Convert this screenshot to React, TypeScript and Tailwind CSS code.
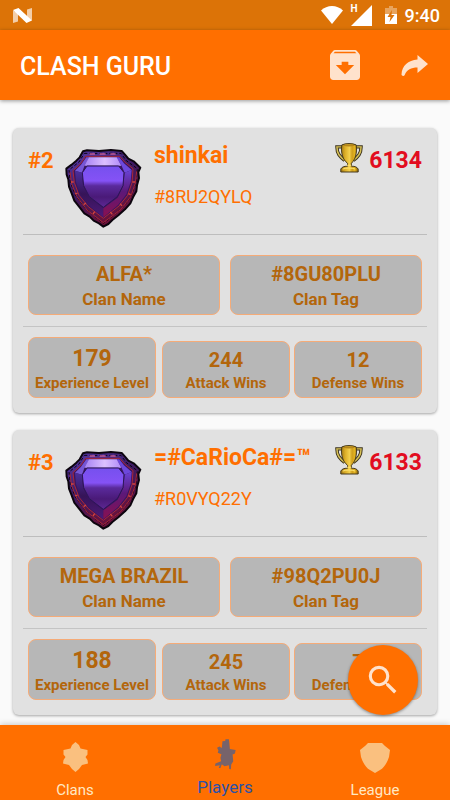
import { MdSearch, MdArchive } from 'react-icons/md';

interface Player {
  rank: number;
  name: string;
  tag: string;
  trophies: number;
  clanName: string;
  clanTag: string;
  level: number;
  attackWins: number;
  defenseWins: number;
}

const PLAYERS: Player[] = [
  {
    rank: 2,
    name: 'shinkai',
    tag: '#8RU2QYLQ',
    trophies: 6134,
    clanName: 'ALFA*',
    clanTag: '#8GU80PLU',
    level: 179,
    attackWins: 244,
    defenseWins: 12,
  },
  {
    rank: 3,
    name: '=#CaRioCa#=™',
    tag: '#R0VYQ22Y',
    trophies: 6133,
    clanName: 'MEGA BRAZIL',
    clanTag: '#98Q2PU0J',
    level: 188,
    attackWins: 245,
    defenseWins: 7,
  },
];

function StatusBar() {
  return (
    <div className="flex h-[30px] shrink-0 items-center justify-between bg-[#dc7307] pl-[13px] pr-[10px] text-white">
      <svg className="h-[15px] w-[19px]" viewBox="0 0 19 15" fill="currentColor">
        <path d="M0 2.500 5 5v8.500L0 15z" opacity=".65" />
        <path d="M14 1.500 19 0v12.500L14 10z" opacity=".65" />
        <path d="M0 2 5.500 0 19 12.500 13.500 15z" />
      </svg>
      <div className="flex items-center">
        <svg className="h-[18px] w-[22px]" viewBox="0 0 22 18" fill="currentColor">
          <path d="M0 4.500C6-1.500 16-1.500 22 4.500L11 18z" />
        </svg>
        <div className="relative ml-2 h-[22px] w-[21px]">
          <svg className="h-full w-full" viewBox="0 0 21 22" fill="currentColor">
            <path d="M21 1v21H0z" />
          </svg>
          <span className="absolute left-0 top-0 text-[10px] font-bold leading-[10px]">H</span>
        </div>
        <svg className="ml-[13px] h-[18px] w-[12px]" viewBox="0 0 12 18" fill="currentColor">
          <path d="M4 0h4v2h4v6H0V2h4z" opacity=".35" />
          <path d="M0 8h12v10H0z" />
          <path d="M7 4 2.500 11H5.500L4.500 16 9.500 9H6.500z" fill="#dc7307" />
        </svg>
        <span className="ml-2 pt-px text-[18px] font-medium">9:40</span>
      </div>
    </div>
  );
}

function AppBar() {
  return (
    <header className="z-10 flex h-[70px] shrink-0 items-center justify-between bg-[#ff6f00] pl-5 pr-[22px] shadow-[0_1px_4px_rgba(0,0,0,0.4)]">
      <h1 className="pt-1 text-[25px] font-medium leading-8 text-white">CLASH GURU</h1>
      <div className="flex items-center gap-9 text-[#ffe2cc]">
        <button aria-label="Archive">
          <MdArchive className="h-10 w-10" />
        </button>
        <button aria-label="Share">
          <svg className="h-[21px] w-[27px]" viewBox="0 0 27 21" fill="currentColor">
            <path d="M27 9 16.500 0v4.500C7 5.500 1 10.500.500 19.500c0 1.500 2.500 2 3.200.500C6 14.500 10 12.600 16.500 12.500V18z" />
          </svg>
        </button>
      </div>
    </header>
  );
}

function LeagueBadge() {
  return (
    <svg className="h-20 w-[78px]" viewBox="18 18 234 240">
      <defs>
        <linearGradient id="badgeRim" x1="0" y1="0" x2=".5" y2="1">
          <stop offset="0" stopColor="#5a3cb4" />
          <stop offset=".5" stopColor="#3d1a62" />
          <stop offset="1" stopColor="#6d1138" />
        </linearGradient>
        <linearGradient id="badgeFace" x1="0" y1="0" x2="0" y2="1">
          <stop offset="0" stopColor="#7650ee" />
          <stop offset=".36" stopColor="#8552f6" />
          <stop offset=".48" stopColor="#5a2a9c" />
          <stop offset=".75" stopColor="#4a1a78" />
          <stop offset="1" stopColor="#5d2894" />
        </linearGradient>
        <linearGradient id="badgeLeft" x1="0" y1="0" x2="0" y2="1">
          <stop offset="0" stopColor="#4c2f9e" />
          <stop offset=".5" stopColor="#361458" />
          <stop offset="1" stopColor="#4c1a78" />
        </linearGradient>
        <linearGradient id="badgeRight" x1="0" y1="0" x2="0" y2="1">
          <stop offset="0" stopColor="#6a43d8" />
          <stop offset=".45" stopColor="#5c1878" />
          <stop offset="1" stopColor="#8a1050" />
        </linearGradient>
        <linearGradient id="badgeTop">
          <stop offset="0" stopColor="#a682f4" />
          <stop offset=".55" stopColor="#dcc0ff" />
          <stop offset="1" stopColor="#b18cf8" />
        </linearGradient>
      </defs>
      <path
        d="M72 28 84 25 120 27 156 24 188 27 198 38 208 50 224 58 244 77 238 90 240 108 234 130 232 148 222 166 214 184 198 202 178 220 160 234 148 246 133 254 120 244 104 236 92 224 76 214 62 196 46 176 38 154 30 134 28 112 23 98 22 80 38 68 52 56 62 46Z"
        fill="url(#badgeRim)"
        stroke="#0c050e"
        strokeWidth="6"
        strokeLinejoin="round"
      />
      <path
        d="M76 34H186L202 56 235 80 231 122 216 164 188 200 133 244 82 202 50 160 34 122 30 84 60 60Z"
        fill="none"
        stroke="#0c050e"
        strokeWidth="3"
        strokeDasharray="9 6"
      />
      <path
        d="M80 43H182L197 60 222 80 219 122 206 160 180 192 133 229 88 194 60 160 46 122 42 86 64 66Z"
        fill="#3a155f"
        stroke="#a8283a"
        strokeWidth="3"
        strokeLinejoin="round"
      />
      <path
        d="M33 90 38 126 54 164 84 204 133 242 186 202 215 164 229 124 233 88"
        fill="none"
        stroke="#a52638"
        strokeWidth="3"
      />
      <path d="M82 46 91 46 77 70 69 92 48 86 66 68Z" fill="#7656d6" />
      <path d="M181 46 172 46 187 70 197 92 218 84 195 64Z" fill="#6d48dc" />
      <path d="M48 86 69 92 72 132 90 167 133 199V226L91 191 64 157 51 120Z" fill="url(#badgeLeft)" />
      <path d="M218 84 197 92 193 132 176 167 133 199V226L177 189 202 157 215 120Z" fill="url(#badgeRight)" />
      <path d="M90 46H173L187 71H76Z" fill="url(#badgeTop)" />
      <path
        d="M84 72H179L195 92 192 131 175 164 133 196 91 164 74 131 70 92Z"
        fill="url(#badgeFace)"
        stroke="#2c1658"
        strokeWidth="3"
        strokeLinejoin="round"
      />
      <path d="M92 36h16m14 0h18m14 0h16" stroke="#c05a98" strokeWidth="4" />
      <path
        d="M36 120h8m4 36 8-3m18 35 7-5m21 33 5-7M228 120h-8m-5 38-7-3m-19 36-6-6m-23 32-6-7"
        stroke="#d2453f"
        strokeWidth="4"
      />
    </svg>
  );
}

function Trophy() {
  return (
    <svg className="h-[30px] w-[28px]" viewBox="0 0 29 31">
      <defs>
        <linearGradient id="cup">
          <stop offset="0" stopColor="#9c7412" />
          <stop offset=".25" stopColor="#dcae28" />
          <stop offset=".5" stopColor="#f3cf4c" />
          <stop offset=".65" stopColor="#cf9f1e" />
          <stop offset=".8" stopColor="#e4b41f" />
          <stop offset="1" stopColor="#8a640c" />
        </linearGradient>
      </defs>
      <path d="M8 4H2c0 7 3 10 8 14M21 4h6c0 7-3 10-8 14" fill="none" stroke="#3b321c" strokeWidth="3.500" />
      <path d="M8 4H2c0 7 3 10 8 14M21 4h6c0 7-3 10-8 14" fill="none" stroke="#d8c257" strokeWidth="1.500" />
      <path
        d="M7 2c4-2 11-2 15 0 1 9-1 15-5 19v3c4 0 6 1 7 3v3H6v-3c1-2 3-3 7-3v-3C8 17 6 11 7 2z"
        fill="url(#cup)"
        stroke="#40351b"
        strokeWidth="1"
      />
      <path d="M8 2.500c4-1.500 9-1.500 13 0-4 1.500-9 1.500-13 0z" fill="#b5861a" />
      <path d="M12 23h5M8 27c4-1.500 9-1.500 13 0" fill="none" stroke="#ffe675" />
    </svg>
  );
}

function ClanStat({ value, label }: { value: string; label: string }) {
  return (
    <div className="flex-1 rounded-lg border border-[#f5ab78] bg-[#b7b7b7] pb-1 pt-1 text-center font-bold text-[#b3660c]">
      <p className="text-[20px] leading-7">{value}</p>
      <p className="text-[17px] leading-[22px]">{label}</p>
    </div>
  );
}

function WinStat({ value, label }: { value: number; label: string }) {
  return (
    <div className="flex-1 rounded-lg border border-[#f5ab78] bg-[#b7b7b7] pb-1 pt-[5px] text-center font-bold text-[#b3660c]">
      <p className="text-[20px] leading-[26px]">{value}</p>
      <p className="whitespace-nowrap text-[15px] leading-5">{label}</p>
    </div>
  );
}

function PlayerCard({ player }: { player: Player }) {
  return (
    <article className="rounded-md bg-[#e1e1e1] px-[10px] pb-[15px] shadow-[0_1px_3px_rgba(0,0,0,0.35)]">
      <div className="flex h-[106px] items-start px-[5px]">
        <span className="w-[37px] pt-[19px] text-[22px] font-bold leading-7 text-[#ff6f00]">#{player.rank}</span>
        <div className="pt-5">
          <LeagueBadge />
        </div>
        <div className="ml-[11px] flex-1 pt-[14px] text-[#ff6f00]">
          <h2 className="text-[23px] font-bold leading-7">{player.name}</h2>
          <p className="pt-[15px] text-[18px] leading-6">{player.tag}</p>
        </div>
        <div className="flex items-start gap-[6px] pt-[15px]">
          <Trophy />
          <span className="pt-1 text-[23px] font-bold leading-7 text-[#e20d20]">{player.trophies}</span>
        </div>
      </div>
      <div className="flex gap-[10px] border-t border-[#bdbdbd] px-[5px] pb-[11px] pt-5">
        <ClanStat value={player.clanName} label="Clan Name" />
        <ClanStat value={player.clanTag} label="Clan Tag" />
      </div>
      <div className="flex items-end gap-1 border-t border-[#c4c4c4] px-[5px] pt-[10px]">
        <div className="mr-[2px] flex-1 rounded-lg border border-[#f5ab78] bg-[#b7b7b7] pb-1 pt-[7px] text-center font-bold text-[#b3660c]">
          <p className="text-[23px] leading-7">{player.level}</p>
          <p className="whitespace-nowrap text-[15px] leading-5">Experience Level</p>
        </div>
        <WinStat value={player.attackWins} label="Attack Wins" />
        <WinStat value={player.defenseWins} label="Defense Wins" />
      </div>
    </article>
  );
}

function BottomNav() {
  return (
    <nav className="z-10 grid h-[75px] shrink-0 grid-cols-3 bg-[#ff6f00] text-[#ffe9c4] shadow-[0_-1px_6px_rgba(0,0,0,0.2)]">
      <a href="#clans" className="flex flex-col items-center pt-[17px]">
        <svg className="h-[30px] w-[25px]" viewBox="0 0 25 30" fill="#fac07f">
          <path d="M12.500 0 16 3 17.500 6.500 24.500 8 24.500 12.500 22.500 15 24.500 18 25 21.500 19 23 16 27 12.500 30 9 27 6 23 0 21.500.500 18 2.500 15 .500 12.500.500 8 7.500 6.500 9 3Z" />
        </svg>
        <span className="mt-[9px] text-[15px] leading-[18px]">Clans</span>
      </a>
      <a href="#players" aria-current="page" className="flex flex-col items-center pt-[14px]">
        <svg className="h-[31px] w-[21px]" viewBox="60 44 62 92" fill="#77636a">
          <path d="M82 51 90 50 91 45 101 45 102 52 104 74 121 77 119 87 112 90 114 110 108 120 107 134 102 133 101 122 88 125 80 119 76 130 71 130 74 122 60 124 61 117 78 110 76 100 79 89 68 85 70 78 66 70 73 66 80 71Z" />
        </svg>
        <span className="mt-[5px] text-[17px] leading-6 text-[#2c52a8]">Players</span>
      </a>
      <a href="#league" className="flex flex-col items-center pt-[18px]">
        <svg className="h-[30px] w-[30px]" viewBox="0 0 30 30" fill="#fac07f">
          <path d="M8 0H22L25 3 30 7 29 14C27 20 24 25 20 27L15 30 10 27C6 25 3 20 1 14L0 7 5 3Z" />
        </svg>
        <span className="mt-[8px] text-[15px] leading-[18px]">League</span>
      </a>
    </nav>
  );
}

export default function App() {
  return (
    <div className="flex h-screen flex-col bg-[#fafafa] font-['Roboto',sans-serif]">
      <StatusBar />
      <AppBar />
      <main className="flex flex-1 flex-col gap-[17px] overflow-hidden px-[13px] pt-7">
        {PLAYERS.map((player) => (
          <PlayerCard key={player.rank} player={player} />
        ))}
      </main>
      <button
        aria-label="Search players"
        className="fixed bottom-[85px] right-8 z-20 flex h-[70px] w-[70px] items-center justify-center rounded-full bg-[#ff6f00] text-[#ffe2cc] shadow-[0_1px_3px_rgba(0,0,0,0.4)]"
      >
        <MdSearch className="h-[38px] w-[38px]" />
      </button>
      <BottomNav />
    </div>
  );
}
